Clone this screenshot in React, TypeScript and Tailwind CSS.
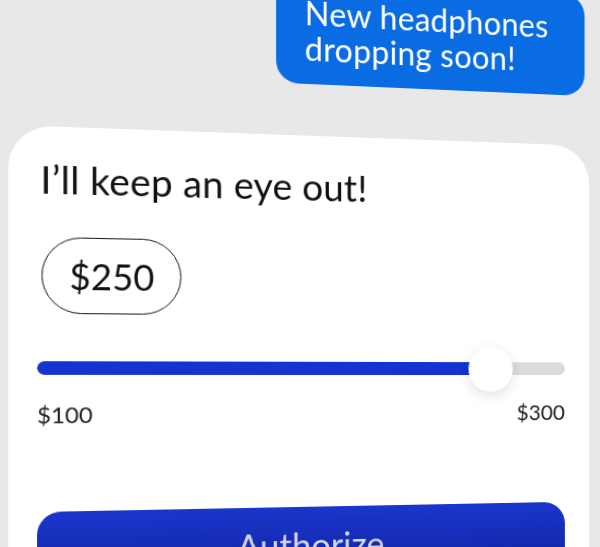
export default function App() {
  return (
    <div className="w-[600px] h-[547px] overflow-hidden bg-[#e8e8e8] [font-family:Lato,'Open_Sans',sans-serif]">
      <div className="w-[600px] h-[547px] flex flex-col origin-[400px_377px] [transform:perspective(1000px)_rotateY(8.6deg)]">
        <div className="self-end mr-[8px] mt-[-16px] w-[315px] rounded-[22px] bg-[#0a6ce2] pl-[28px] pt-[16px] pb-[18px] text-white text-[32px] leading-[35px] tracking-[0.3px]">
          <div>New headphones</div>
          <div>dropping soon!</div>
        </div>
        <div className="ml-[26px] mt-[51px] w-[571px] flex-1 rounded-t-[40px] bg-white px-[26px] pt-[29px] flex flex-col">
          <h1 className="pl-[3px] text-[36.5px] leading-[1.2] tracking-[0.2px] text-[#111]">I’ll keep an eye out!</h1>
          <div className="ml-[4px] mt-[32px] w-[130px] h-[73px] rounded-full border-[1.5px] border-[#1f1f1f] flex items-center justify-center text-[34px] text-[#111]">
            $250
          </div>
          <div className="mt-[29px] h-[46px] relative flex items-center">
            <div className="w-full h-[13px] rounded-full bg-[#dcdcdc] overflow-hidden">
              <div className="h-full w-[85%] bg-[#1433d0] rounded-l-full" />
            </div>
            <div className="absolute left-[85%] top-0 -ml-[23px] w-[46px] h-[46px] rounded-full bg-white shadow-[0_4px_14px_rgba(0,0,0,0.12)]" />
          </div>
          <div className="mt-[8px] flex justify-between text-[22px] leading-[1.2] text-[#1f1f1f]">
            <span>$100</span>
            <span>$300</span>
          </div>
          <button className="mt-[79px] h-[78px] w-full rounded-[22px] bg-gradient-to-b from-[#1a36cc] to-[#0f209a] pt-[18px] text-[34px] leading-[1.2] text-[#d4d7e8] flex justify-center items-start">
            Authorize
          </button>
        </div>
      </div>
    </div>
  );
}
